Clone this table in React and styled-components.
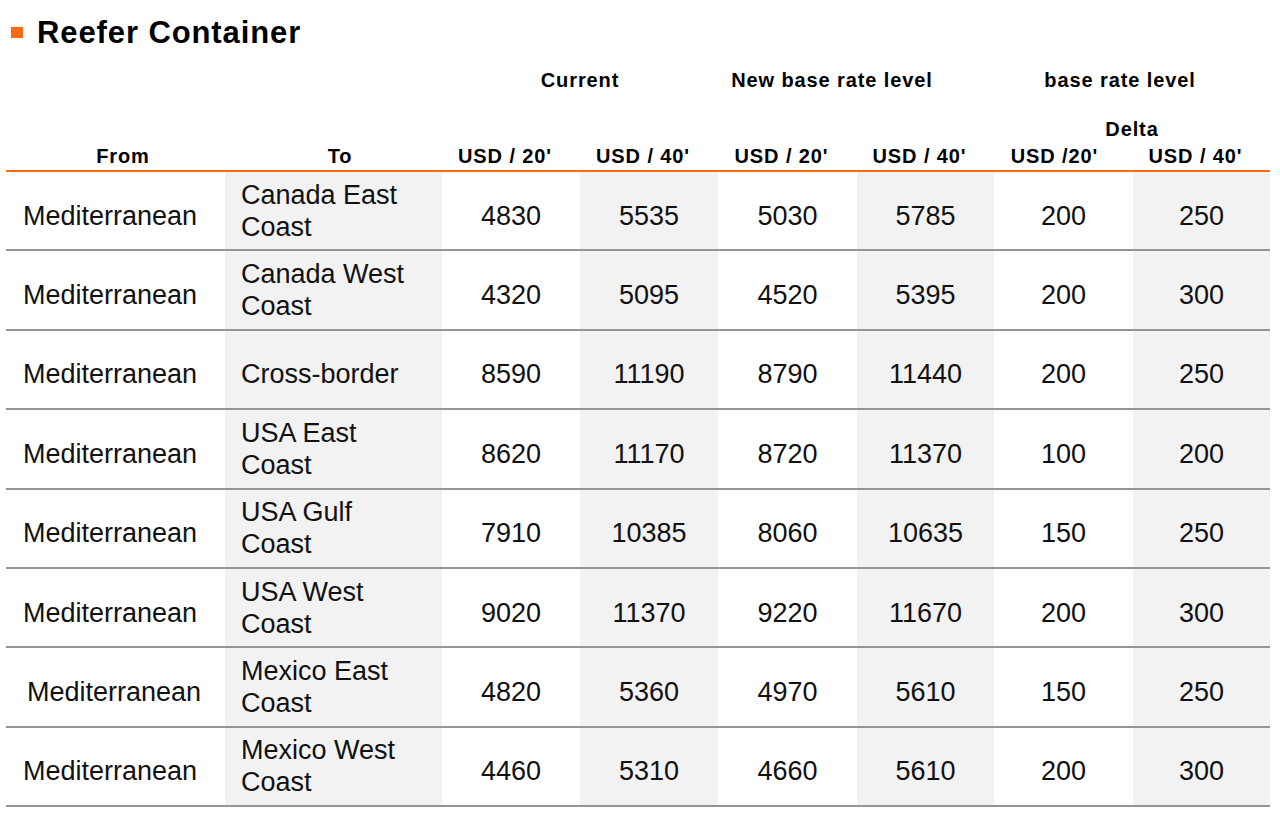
import styled, { createGlobalStyle } from "styled-components";

const GlobalStyle = createGlobalStyle`
  body {
    margin: 0;
    background: #ffffff;
    font-family: "Liberation Sans", Arial, sans-serif;
    color: #000;
  }
`;

const COLS = "219px 217px 138px 138px 139px 137px 139px 137px";
const ORANGE = "#fb6a12";

const Page = styled.div`
  width: 1264px;
  padding-left: 6px;
`;

const TitleRow = styled.div`
  display: flex;
  align-items: center;
  height: 36px;
  margin-top: 15px;
`;

const Bullet = styled.span`
  width: 12px;
  height: 11px;
  margin: 0 14px 2px 5px;
  background: ${ORANGE};
`;

const Title = styled.h1`
  margin: 0;
  font-size: 31px;
  line-height: 36px;
  font-weight: 700;
  letter-spacing: 0.9px;
`;

const HeaderGrid = styled.div`
  display: grid;
  grid-template-columns: ${COLS};
  grid-template-rows: 58px 39px 22px;
  border-bottom: 2px solid ${ORANGE};
`;

const HeadCell = styled.div`
  grid-column: ${(p) => p.$col};
  grid-row: ${(p) => p.$row};
  align-self: ${(p) => (p.$row === 3 ? "start" : "center")};
  text-align: center;
  font-size: 20px;
  line-height: 16px;
  font-weight: 700;
  letter-spacing: 0.9px;
  white-space: nowrap;
  padding-left: ${(p) => p.$pl || 0}px;
  padding-right: ${(p) => p.$pr || 0}px;
`;

const Row = styled.div`
  display: grid;
  grid-template-columns: ${COLS};
  height: 79.4px;
  box-sizing: border-box;
  border-bottom: 2px solid #959595;
`;

const Cell = styled.div`
  display: flex;
  align-items: center;
  justify-content: ${(p) => (p.$left ? "flex-start" : "center")};
  padding-left: ${(p) => p.$indent || 0}px;
  padding-top: ${(p) => (p.$shift ? 10 : 0)}px;
  background: ${(p) => (p.$shade ? "#f2f2f2" : "transparent")};
  font-size: 27px;
  line-height: 32px;
  color: #111;
`;

const groups = [
  { text: "Current", col: "3 / 5", row: 1 },
  { text: "New base rate level", col: "5 / 7", row: 1, pr: 48 },
  { text: "base rate level", col: "7 / 9", row: 1, pr: 24 },
  { text: "Delta", col: "7 / 9", row: 2 },
  { text: "From", col: "1", row: 3, pl: 15 },
  { text: "To", col: "2", row: 3, pl: 13 },
  { text: "USD / 20'", col: "3", row: 3, pr: 12 },
  { text: "USD / 40'", col: "4", row: 3, pr: 12 },
  { text: "USD / 20'", col: "5", row: 3, pr: 12 },
  { text: "USD / 40'", col: "6", row: 3, pr: 12 },
  { text: "USD /20'", col: "7", row: 3, pr: 18 },
  { text: "USD / 40'", col: "8", row: 3, pr: 12 },
];

const rows = [
  { to: ["Canada East", "Coast"], values: [4830, 5535, 5030, 5785, 200, 250] },
  { to: ["Canada West", "Coast"], values: [4320, 5095, 4520, 5395, 200, 300] },
  { to: ["Cross-border"], values: [8590, 11190, 8790, 11440, 200, 250] },
  { to: ["USA East", "Coast"], values: [8620, 11170, 8720, 11370, 100, 200] },
  { to: ["USA Gulf", "Coast"], values: [7910, 10385, 8060, 10635, 150, 250] },
  { to: ["USA West", "Coast"], values: [9020, 11370, 9220, 11670, 200, 300] },
  { to: ["Mexico East", "Coast"], values: [4820, 5360, 4970, 5610, 150, 250], indent: 21 },
  { to: ["Mexico West", "Coast"], values: [4460, 5310, 4660, 5610, 200, 300] },
];

function RateRow({ to, values, indent }) {
  return (
    <Row>
      <Cell $left $shift $indent={indent || 17}>
        Mediterranean
      </Cell>
      <Cell $left $shade $indent={16} $shift={to.length === 1}>
        <div>
          {to.map((line) => (
            <div key={line}>{line}</div>
          ))}
        </div>
      </Cell>
      {values.map((v, i) => (
        <Cell key={i} $shift $shade={i % 2 === 1}>
          {v}
        </Cell>
      ))}
    </Row>
  );
}

export default function App() {
  return (
    <Page>
      <GlobalStyle />
      <TitleRow>
        <Bullet />
        <Title>Reefer Container</Title>
      </TitleRow>
      <HeaderGrid>
        {groups.map((g, i) => (
          <HeadCell key={i} $col={g.col} $row={g.row} $pl={g.pl} $pr={g.pr}>
            {g.text}
          </HeadCell>
        ))}
      </HeaderGrid>
      {rows.map((r, i) => (
        <RateRow key={i} to={r.to} values={r.values} indent={r.indent} />
      ))}
    </Page>
  );
}
